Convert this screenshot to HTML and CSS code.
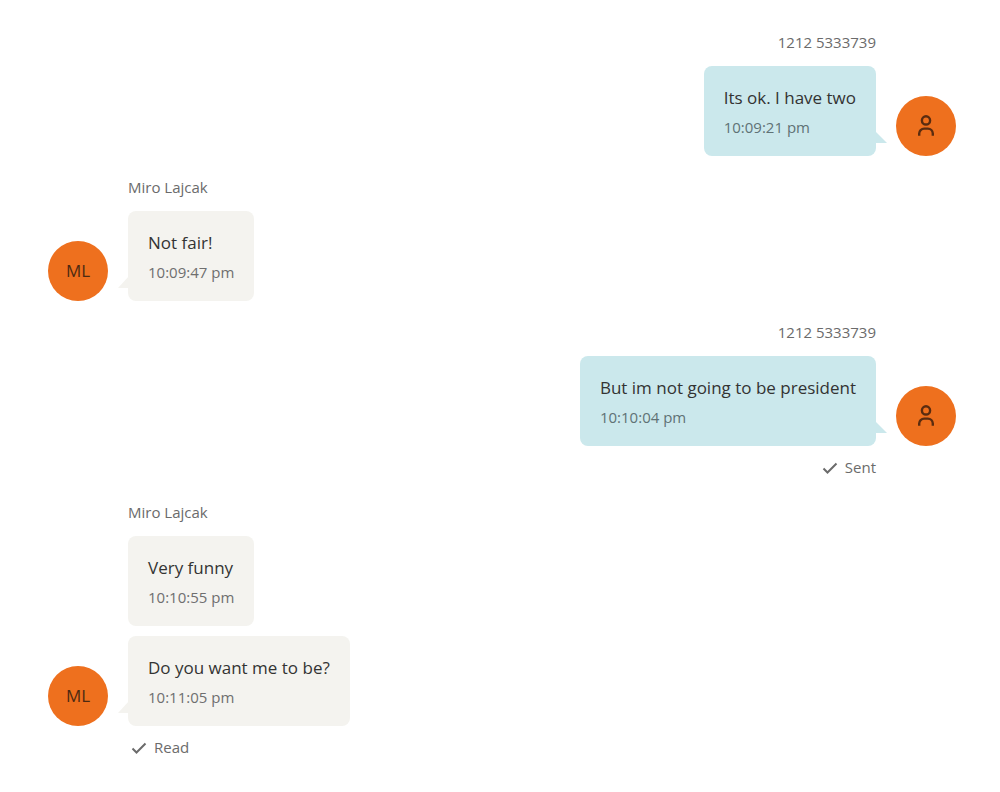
FILE: index.html
```html
<!DOCTYPE html>
<html lang="en">
<head>
    <meta charset="UTF-8">
    <meta name="viewport" content="width=device-width, initial-scale=1.0">
    <title>Conversation</title>
    <link rel="stylesheet" href="styles.css">
</head>
<body>
    <main class="chat">
        <section class="group sent">
            <div class="name">1212 5333739</div>
            <div class="bubbles">
                <div class="bubble">
                    <p class="text">Its ok. I have two</p>
                    <time class="time">10:09:21 pm</time>
                </div>
            </div>
            <div class="avatar">
                <svg class="person" viewBox="0 0 18 22" aria-hidden="true">
                    <circle cx="9" cy="5.4" r="4.1" />
                    <path d="M2.2 20.8v-2.2a5 5 0 0 1 5-5h3.6a5 5 0 0 1 5 5v2.2" />
                </svg>
            </div>
        </section>

        <section class="group received">
            <div class="name">Miro Lajcak</div>
            <div class="bubbles">
                <div class="bubble">
                    <p class="text">Not fair!</p>
                    <time class="time">10:09:47 pm</time>
                </div>
            </div>
            <div class="avatar">ML</div>
        </section>

        <section class="group sent">
            <div class="name">1212 5333739</div>
            <div class="bubbles">
                <div class="bubble">
                    <p class="text">But im not going to be president</p>
                    <time class="time">10:10:04 pm</time>
                </div>
            </div>
            <div class="avatar">
                <svg class="person" viewBox="0 0 18 22" aria-hidden="true">
                    <circle cx="9" cy="5.4" r="4.1" />
                    <path d="M2.2 20.8v-2.2a5 5 0 0 1 5-5h3.6a5 5 0 0 1 5 5v2.2" />
                </svg>
            </div>
            <div class="status">
                <svg class="check" viewBox="0 0 16 12" aria-hidden="true"><path d="M1.5 6.5l4 4L14.5 1.5" /></svg>
                <span>Sent</span>
            </div>
        </section>

        <section class="group received">
            <div class="name">Miro Lajcak</div>
            <div class="bubbles">
                <div class="bubble">
                    <p class="text">Very funny</p>
                    <time class="time">10:10:55 pm</time>
                </div>
                <div class="bubble">
                    <p class="text">Do you want me to be?</p>
                    <time class="time">10:11:05 pm</time>
                </div>
            </div>
            <div class="avatar">ML</div>
            <div class="status">
                <svg class="check" viewBox="0 0 16 12" aria-hidden="true"><path d="M1.5 6.5l4 4L14.5 1.5" /></svg>
                <span>Read</span>
            </div>
        </section>
    </main>
</body>
</html>
```

FILE: styles.css
```css
/* Global Styles */
body {
    margin: 0;
    background-color: #ffffff;
    font-family: 'Open Sans', 'Noto Sans', sans-serif;
    color: #333333;
}

.chat {
    display: flex;
    flex-direction: column;
    gap: 20px;
    padding: 31px 44px 31px 48px;
}

/* Message groups */
.group {
    display: grid;
    column-gap: 20px;
    row-gap: 10px;
}

.received {
    grid-template-columns: 60px 1fr;
    grid-template-areas:
        ". name"
        "avatar bubbles"
        ". status";
    justify-items: start;
}

.sent {
    grid-template-columns: 1fr 60px;
    grid-template-areas:
        "name ."
        "bubbles avatar"
        "status .";
    justify-items: end;
}

/* Groups without a status line only need two rows */
.received:not(:has(.status)) {
    grid-template-areas:
        ". name"
        "avatar bubbles";
}

.sent:not(:has(.status)) {
    grid-template-areas:
        "name ."
        "bubbles avatar";
}

.name,
.status {
    padding-bottom: 2px;
    font-size: 15px;
    line-height: 23px;
    color: #6b6b6b;
}

.name {
    grid-area: name;
}

.bubbles {
    grid-area: bubbles;
    display: flex;
    flex-direction: column;
    align-items: flex-start;
    gap: 10px;
}

.bubble {
    position: relative;
    padding: 20px 20px 19px;
    border-radius: 8px;
    background-color: #f4f3ef;
}

.sent .bubble {
    background-color: #cbe8ec;
}

.text {
    margin: 0 0 7px;
    font-size: 17px;
    line-height: 24px;
}

.time {
    display: block;
    font-size: 15px;
    line-height: 20px;
    color: #6f6f6f;
}

.sent .time {
    color: #5f7275;
}

/* Bubble tail, only on the last message */
.bubble:last-child::after {
    content: "";
    position: absolute;
    bottom: 13px;
    left: -10px;
    width: 11px;
    height: 12px;
    background-color: inherit;
    clip-path: polygon(100% 0, 100% 100%, 0 100%);
}

.sent .bubble:last-child::after {
    left: auto;
    right: -11px;
    width: 12px;
    clip-path: polygon(0 0, 100% 100%, 0 100%);
}

.avatar {
    grid-area: avatar;
    align-self: end;
    display: flex;
    align-items: center;
    justify-content: center;
    width: 60px;
    height: 60px;
    border-radius: 50%;
    background-color: #ee701e;
    color: #4d2a12;
    font-size: 17px;
    line-height: 24px;
}

.person {
    width: 18px;
    height: 22px;
    fill: none;
    stroke: #5a2c10;
    stroke-width: 2.4;
}

.status {
    grid-area: status;
    display: flex;
    align-items: center;
    gap: 7px;
}

.received .status {
    padding-left: 3px;
}

.check {
    width: 16px;
    height: 12px;
    fill: none;
    stroke: #6b6b6b;
    stroke-width: 2;
}
```
